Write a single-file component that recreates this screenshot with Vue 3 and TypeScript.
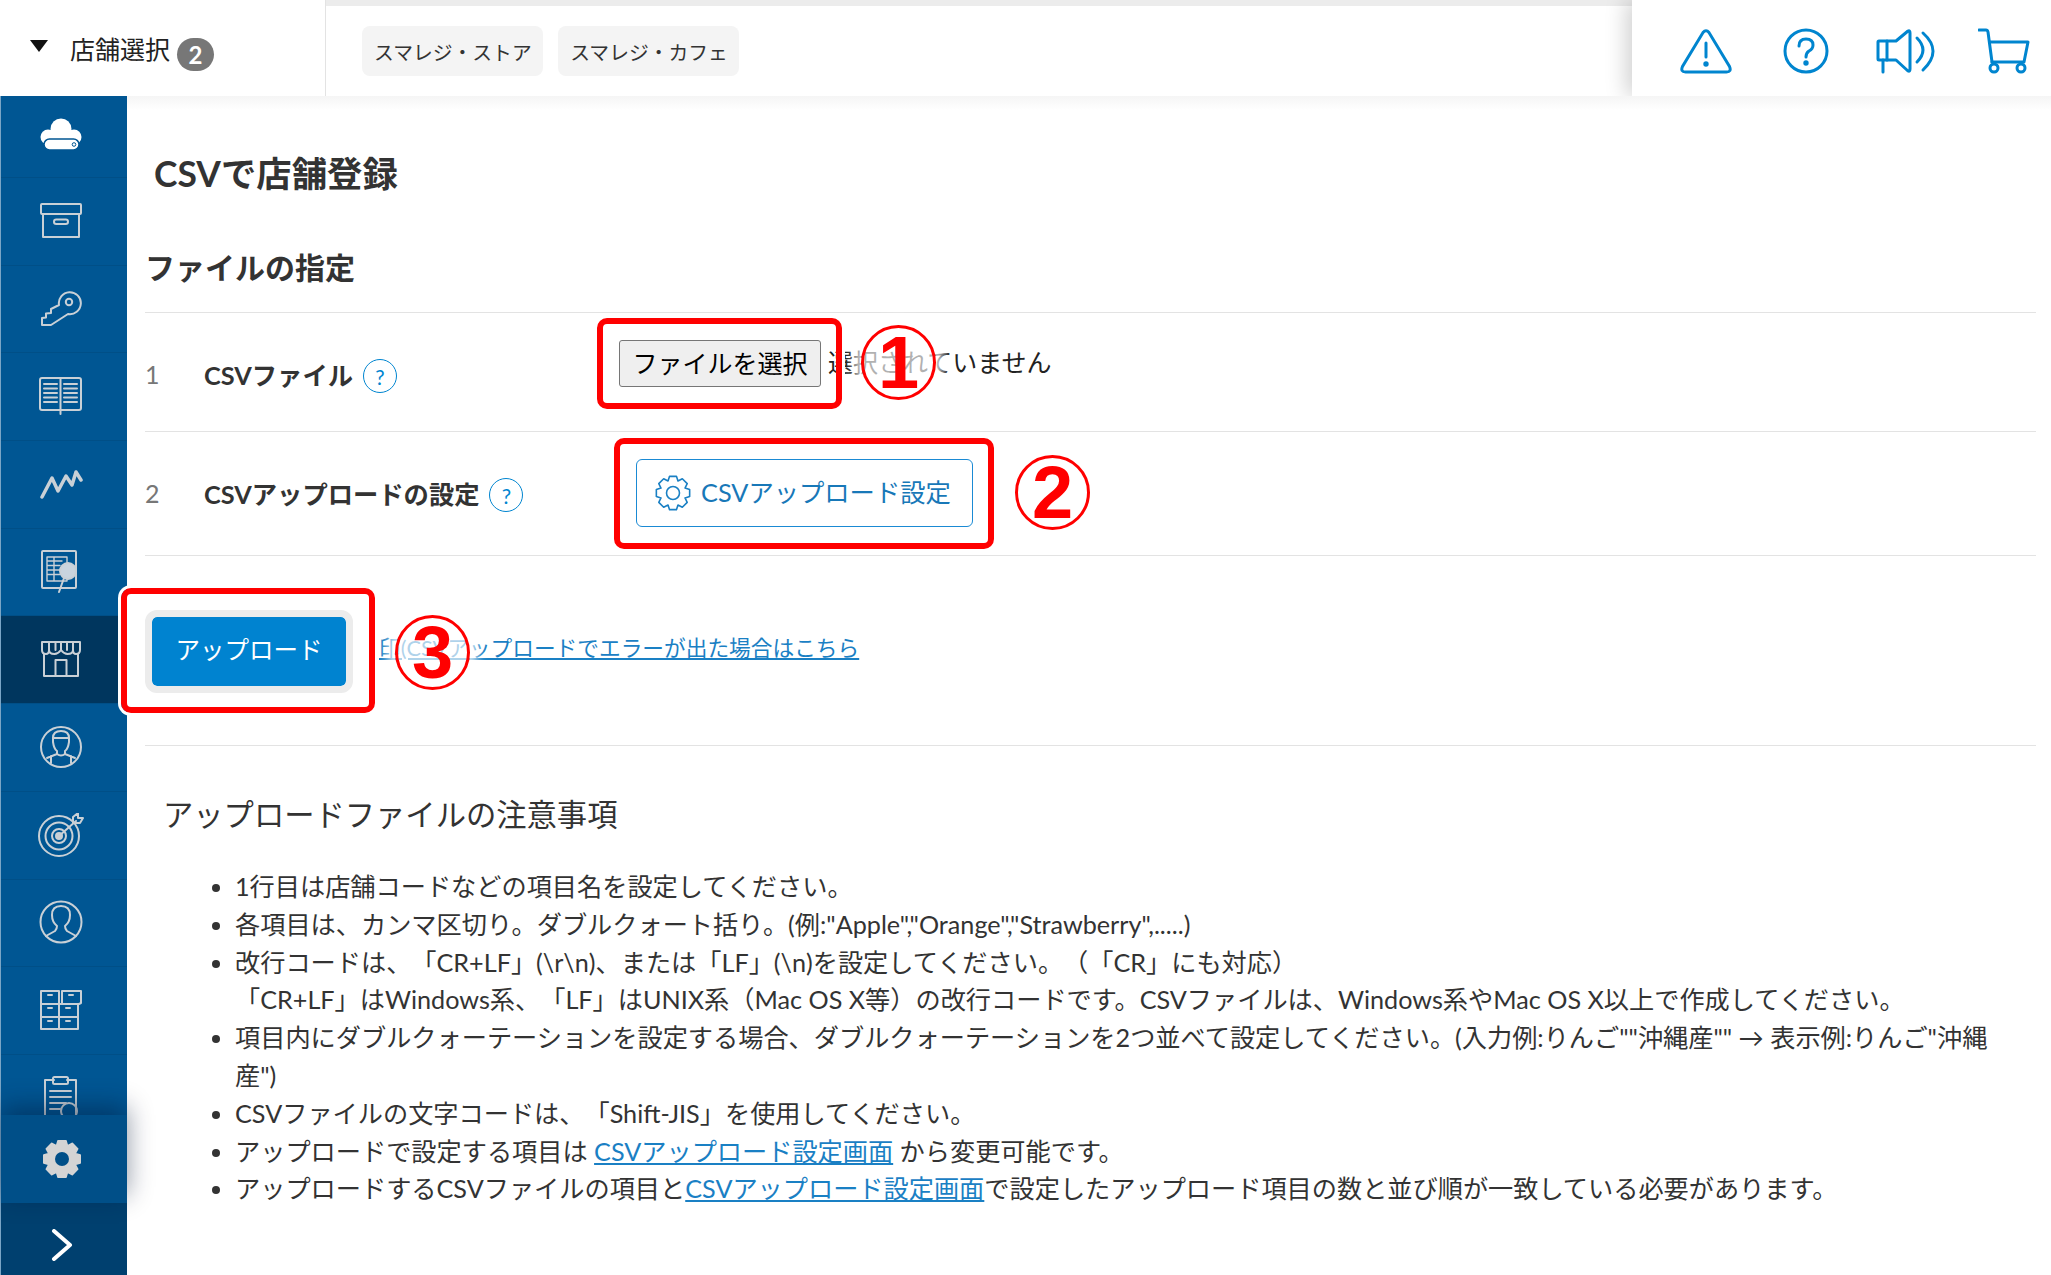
<script setup lang="ts">
function gear(cx: number, cy: number, teeth: number, rOut: number, rIn: number): string {
  const step = (Math.PI * 2) / teeth
  const pts: string[] = []
  for (let i = 0; i < teeth; i++) {
    const a = i * step - Math.PI / 2
    const offsets: [number, number][] = [
      [-0.5, rIn],
      [-0.26, rOut],
      [0.26, rOut],
      [0.5, rIn],
    ]
    for (const [o, r] of offsets) {
      const t = a + o * step
      pts.push(`${(cx + r * Math.cos(t)).toFixed(2)} ${(cy + r * Math.sin(t)).toFixed(2)}`)
    }
  }
  return 'M' + pts.join('L') + 'Z'
}
const settingsGear = gear(18, 18, 8, 17, 13)
const navGear = gear(19, 19, 8, 18.5, 14)
const chips = ['スマレジ・ストア', 'スマレジ・カフェ']
const notes = [
  '1行目は店舗コードなどの項目名を設定してください。',
  '各項目は、カンマ区切り。ダブルクォート括り。(例:"Apple","Orange","Strawberry",.....)',
]
</script>

<template>
  <div class="app">
    <header class="header">
      <div class="store-select">
        <span class="tri"></span>
        <span class="store-label">店舗選択</span>
        <span class="badge">2</span>
      </div>
      <div class="chips">
        <span v-for="c in chips" :key="c" class="chip">{{ c }}</span>
      </div>
      <div class="tools">
        <svg width="52" height="46" viewBox="0 0 52 46" fill="none" stroke="#0085cf" stroke-width="3" stroke-linecap="round">
          <path d="M23 4.500Q26 .9 29 4.500L49.500 38.500Q51.800 44 46.500 44H5.500Q.2 44 2.500 38.500Z" />
          <path d="M26 15V29" />
          <circle cx="26" cy="36" r="1.200" fill="#0085cf" />
        </svg>
        <svg width="46" height="46" viewBox="0 0 46 46" fill="none" stroke="#0085cf" stroke-width="3" stroke-linecap="round">
          <circle cx="23" cy="23" r="21" />
          <path d="M16 18Q16 11 23 11Q30 11 30 17Q30 21 26 23Q23 25 23 29" />
          <circle cx="23" cy="35" r="1.200" fill="#0085cf" />
        </svg>
        <svg width="60" height="46" viewBox="0 0 60 46" fill="none" stroke="#0085cf" stroke-width="3" stroke-linecap="round" stroke-linejoin="round">
          <path d="M3 13H20L32 3Q34 2 34 5V41Q34 44 32 43L20 32H3Q2 32 2 31V14Q2 13 3 13Z" />
          <path d="M7 32V44M11 13V32" />
          <path d="M41 10Q53 22 41 34M47 5Q67 23 47 42" />
        </svg>
        <svg width="52" height="46" viewBox="0 0 52 46" fill="none" stroke="#0085cf" stroke-width="3" stroke-linecap="round" stroke-linejoin="round">
          <path d="M1 2H8Q9.500 2 10 4L14 34" />
          <path d="M12 14H50L46 34H14" />
          <circle cx="16" cy="40" r="4" />
          <circle cx="43" cy="40" r="4" />
        </svg>
      </div>
    </header>

    <div class="body">
      <nav class="sidebar">
        <div class="nav-list">
          <a class="nav-item first">
            <svg width="44" height="34" viewBox="0 0 44 34">
              <g fill="#fff">
                <circle cx="22" cy="11" r="10.500" />
                <circle cx="9" cy="19" r="7.500" />
                <circle cx="35" cy="19" r="7.500" />
                <rect x="7" y="14" width="30" height="13" />
              </g>
              <rect x="5" y="21" width="35" height="11" rx="5.500" fill="#fff" stroke="#005693" stroke-width="1.500" />
              <circle cx="35" cy="26.500" r="1.800" fill="none" stroke="#005693" />
            </svg>
          </a>
          <a class="nav-item">
            <svg width="44" height="36" viewBox="0 0 44 36" class="ico">
              <rect x="2" y="1" width="40" height="10" rx="1" />
              <path d="M4 11V34H40V11" />
              <rect x="15" y="16.500" width="14" height="4.500" rx="2.200" />
            </svg>
          </a>
          <a class="nav-item">
            <svg width="44" height="36" viewBox="0 0 44 36" class="ico">
              <path d="M20 14A11 11 0 1 1 29 23L12 34H3V27L7 26.500V22.500L12 22V18Z" />
              <circle cx="30" cy="11" r="3.200" />
            </svg>
          </a>
          <a class="nav-item">
            <svg width="44" height="38" viewBox="0 0 44 38" class="ico">
              <rect x="1" y="1" width="41" height="32" rx="2" />
              <path d="M21.500 1V37M5 7H18M5 11.500H18M5 16H18M5 20.500H18M5 25H18M25 7H38M25 11.500H38M25 16H38M25 20.500H38M25 25H38" />
            </svg>
          </a>
          <a class="nav-item">
            <svg width="44" height="32" viewBox="0 0 44 32" class="ico wave">
              <path d="M3 29L13 10L19 23L27 8L33 17L37 4L42 12" />
            </svg>
          </a>
          <a class="nav-item">
            <svg width="42" height="44" viewBox="0 0 42 44" class="ico">
              <rect x="2" y="1" width="34" height="37" rx="1" />
              <path class="thin" d="M7 7H27V31H7ZM7 11H22M7 15.500H20M7 20H20M7 24.500H20M14 7V31" />
              <path d="M24 28L19 42" />
              <circle cx="28" cy="21" r="8" fill="#c9d4de" />
            </svg>
          </a>
          <a class="nav-item active">
            <svg width="42" height="38" viewBox="0 0 42 38" class="ico">
              <path d="M2 2H40V10Q40 14 36 14Q33 14 33 10Q33 14 27.500 14Q24 14 21 10Q18 14 14.500 14Q9 14 9 10Q9 14 6 14Q2 14 2 10Z" />
              <path d="M9 2V10M15.500 2V10M21 2V10M27 2V10M33 2V10" />
              <path d="M4 14V36H38V14M15.500 36V20H26.500V36" />
            </svg>
          </a>
          <a class="nav-item">
            <svg width="44" height="44" viewBox="0 0 44 44" class="ico">
              <circle cx="22" cy="22" r="20" />
              <path d="M14 13Q14 6 22 6Q30 6 30 13V17Q29 24 26 26V29L36 33M14 13H30M14 13V17Q15 24 18 26V29L8 33M12 31V38M32 31V38M18 29Q22 32 26 29" />
            </svg>
          </a>
          <a class="nav-item">
            <svg width="46" height="44" viewBox="0 0 46 44" class="ico">
              <circle cx="21" cy="23" r="20" />
              <circle cx="21" cy="23" r="13.500" />
              <circle cx="21" cy="23" r="7" />
              <circle cx="21" cy="23" r="3" fill="#c9d0d6" />
              <path d="M21 23L38 8M35 4V10H42L45 5H40V0Z" />
            </svg>
          </a>
          <a class="nav-item">
            <svg width="44" height="44" viewBox="0 0 44 44" class="ico">
              <circle cx="22" cy="22" r="20.500" />
              <path d="M7 36L16 31Q18 29 18 26Q13 22 13 15Q13 6 22 6Q31 6 31 15Q31 22 26 26Q26 29 28 31L37 36" />
            </svg>
          </a>
          <a class="nav-item">
            <svg width="44" height="40" viewBox="0 0 44 40" class="ico">
              <path d="M2 1H20V14H2ZM23 1H42V13L40 14H23ZM2 14H20V27H2ZM20 14H39V27H20ZM2 27H20V39H2ZM20 27H39V39H20Z" />
              <path d="M9 5H13M30 5H34M9 18H13M27 18H31M9 31H13M27 31H31" />
            </svg>
          </a>
          <a class="nav-item">
            <svg width="38" height="46" viewBox="0 0 38 46" class="ico">
              <path d="M12 5H3V44H34V5H25" />
              <rect x="11" y="2" width="15" height="7" rx="1.500" />
              <path d="M8 16H29M8 22H29M8 28H24M8 34H18" />
              <circle cx="27" cy="36" r="8" />
            </svg>
          </a>
        </div>
        <a class="nav-gear">
          <svg width="38" height="38" viewBox="0 0 38 38">
            <path :d="navGear" fill="#d4d4d4" stroke="#d4d4d4" stroke-width="2" stroke-linejoin="round" />
            <circle cx="19" cy="19" r="7" fill="#004f88" />
          </svg>
        </a>
        <a class="nav-toggle">
          <svg width="22" height="32" viewBox="0 0 22 32" fill="none" stroke="#fff" stroke-width="4" stroke-linecap="round" stroke-linejoin="round">
            <path d="M3 2L19 16L3 30" />
          </svg>
        </a>
      </nav>

      <main class="main">
        <h1 class="title">CSVで店舗登録</h1>
        <h2 class="section">ファイルの指定</h2>

        <div class="row row-file">
          <span class="num">1</span>
          <div class="label label-file">
            <b>CSVファイル</b>
            <span class="help">?</span>
          </div>
          <div class="field file-field">
            <button class="file-btn" type="button">ファイルを選択</button>
            <span class="file-none">選択されていません</span>
          </div>
        </div>

        <div class="row row-setting">
          <span class="num">2</span>
          <div class="label">
            <b>CSVアップロードの設定</b>
            <span class="help">?</span>
          </div>
          <div class="field">
            <button class="setting-btn" type="button">
              <svg width="36" height="36" viewBox="0 0 36 36" fill="none" stroke="#1a80c4" stroke-width="1.600" stroke-linejoin="round">
                <path :d="settingsGear" />
                <circle cx="18" cy="18" r="6.500" />
              </svg>
              <span class="setting-text">CSVアップロード設定</span>
            </button>
          </div>
        </div>

        <div class="upload-row">
          <button class="upload-btn" type="button">アップロード</button>
          <a class="err-link">印(CSVアップロードでエラーが出た場合はこちら</a>
        </div>

        <section class="notes">
          <h3 class="notes-title">アップロードファイルの注意事項</h3>
          <ul class="notes-list">
            <li v-for="n in notes" :key="n">{{ n }}</li>
            <li>
              改行コードは、「CR+LF」(\r\n)、または「LF」(\n)を設定してください。（「CR」にも対応）<br />「CR+LF」はWindows系、「LF」はUNIX系（Mac OS X等）の改行コードです。CSVファイルは、Windows系やMac OS X以上で作成してください。
            </li>
            <li>項目内にダブルクォーテーションを設定する場合、ダブルクォーテーションを2つ並べて設定してください。(入力例:りんご""沖縄産"" → 表示例:りんご"沖縄産")</li>
            <li>CSVファイルの文字コードは、「Shift-JIS」を使用してください。</li>
            <li>アップロードで設定する項目は <a class="link">CSVアップロード設定画面</a> から変更可能です。</li>
            <li>アップロードするCSVファイルの項目と<a class="link">CSVアップロード設定画面</a>で設定したアップロード項目の数と並び順が一致している必要があります。</li>
          </ul>
        </section>
      </main>
    </div>

    <div class="mark c1"><span>1</span></div>
    <div class="mark c2"><span>2</span></div>
    <div class="mark c3"><span>3</span></div>
    <div class="redbox b1"></div>
    <div class="redbox b2"></div>
    <div class="redbox b3"></div>
  </div>
</template>

<style scoped>
.app {
  position: relative;
  width: 2051px;
  height: 1275px;
  overflow: hidden;
  display: flex;
  flex-direction: column;
  background: #fff;
  color: #333;
  font-family: Lato, "Noto Sans CJK JP", sans-serif;
  text-spacing-trim: space-all;
}
.header {
  height: 96px;
  flex: none;
  display: flex;
  overflow: hidden;
}
.store-select {
  flex: none;
  box-sizing: content-box;
  display: flex;
  align-items: center;
  padding-left: 30px;
  width: 295px;
  border-right: 1px solid #e3e3e3;
}
.tri {
  width: 0;
  height: 0;
  border-left: 9px solid transparent;
  border-right: 9px solid transparent;
  border-top: 12px solid #111;
  margin-top: -4px;
}
.store-label {
  margin-left: 22px;
  font-size: 25px;
  color: #222;
  line-height: 1;
  margin-top: 3px;
}
.badge {
  margin-left: 7px;
  width: 37px;
  height: 33px;
  border-radius: 17px;
  background: #777;
  color: #fff;
  font-size: 24px;
  font-weight: 700;
  display: flex;
  align-items: center;
  justify-content: center;
  margin-top: 12px;
}
.chips {
  flex: 1;
  border-top: 6px solid #ececec;
  display: flex;
  align-items: center;
  gap: 15px;
  padding-left: 36px;
}
.chip {
  height: 50px;
  padding: 0 11.500px 0 12px;
  background: #f4f4f4;
  border-radius: 8px;
  font-size: 19.800px;
  color: #333;
  display: flex;
  align-items: center;
}
.tools {
  width: 371px;
  flex: none;
  padding: 28px 0 0 48px;
  display: grid;
  grid-template-columns: 103px 93px 102px 52px;
  align-items: start;
  background: #fff;
  position: relative;
  box-shadow: -6px 0 20px rgba(0, 0, 0, 0.18);
}
.body {
  flex: 1;
  display: flex;
  min-height: 0;
}
.sidebar {
  width: 127px;
  flex: none;
  display: flex;
  flex-direction: column;
  background: #005693;
  border-left: 1px solid #7aa5c6;
  box-sizing: border-box;
}
.nav-list {
  flex: 1;
  min-height: 0;
  overflow: hidden;
}
.nav-item {
  height: 87.700px;
  box-sizing: border-box;
  display: flex;
  align-items: center;
  justify-content: center;
  border-bottom: 1px solid #004f87;
  padding: 0 6px 1px 0;
}
.nav-item.first {
  height: 82px;
  padding: 0 6px 3px 0;
}
.nav-item.active {
  background: #00365e;
}
.ico {
  fill: none;
  stroke: #c9d0d6;
  stroke-width: 2;
  stroke-linejoin: round;
  stroke-linecap: round;
}
.ico.wave {
  stroke-width: 3.500;
}
.thin {
  stroke-width: 1.400;
}
.nav-gear {
  height: 88px;
  flex: none;
  background: #004f88;
  display: flex;
  align-items: center;
  justify-content: center;
  padding-right: 4px;
  box-shadow: 0 -8px 24px rgba(0, 20, 50, 0.45);
  position: relative;
}
.nav-toggle {
  height: 72px;
  flex: none;
  background: #00406f;
  display: flex;
  align-items: center;
  justify-content: center;
  padding: 12px 4px 0 0;
  box-sizing: border-box;
}
.main {
  flex: 1;
  min-width: 0;
  padding: 54px 15px 0 18px;
  background: linear-gradient(#f5f5f5, #fff 14px);
  box-sizing: border-box;
}
.title {
  margin: 0 0 0 9px;
  font-size: 35.400px;
  line-height: 48px;
  font-weight: 700;
  color: #333;
}
.section {
  margin: 45px 0 21px;
  font-size: 30px;
  line-height: 48px;
  font-weight: 700;
  color: #333;
}
.row {
  display: grid;
  grid-template-columns: 59px 415px 1fr;
  border-top: 1px solid #e3e3e3;
  box-sizing: border-box;
}
.row-file {
  height: 119px;
}
.row-setting {
  height: 124px;
  align-items: center;
}
.num {
  font-size: 25px;
  color: #777;
  align-self: center;
}
.row-file .num,
.label-file {
  padding-top: 4px;
}
.row-setting .num,
.row-setting .label {
  padding-bottom: 1px;
}
.label {
  display: flex;
  align-items: center;
  gap: 10px;
  font-size: 25.300px;
  color: #333;
}
.help {
  width: 34px;
  height: 34px;
  box-sizing: border-box;
  border: 1px solid #0085d0;
  border-radius: 50%;
  color: #0085d0;
  font-size: 21px;
  display: flex;
  align-items: center;
  justify-content: center;
  margin-top: 4px;
}
.file-field {
  display: flex;
  align-items: center;
  gap: 7px;
  padding-top: 27px;
  align-self: start;
}
.file-btn {
  width: 202px;
  height: 47px;
  background: #efefef;
  border: 1px solid #767676;
  border-radius: 3px;
  font: inherit;
  font-size: 25px;
  color: #000;
  padding: 0 0 4px;
}
.file-none {
  font-size: 25px;
  color: #222;
  margin-top: -5px;
}
.setting-btn {
  margin: -2px 0 0 17px;
  width: 337px;
  height: 68px;
  background: #fff;
  border: 1px solid #1a8ad4;
  border-radius: 6px;
  font: inherit;
  color: #1878b8;
  display: flex;
  align-items: center;
  gap: 10px;
  padding: 0 0 0 18px;
  white-space: nowrap;
}
.setting-text {
  font-size: 25.300px;
  margin-top: -3px;
}
.upload-row {
  height: 191px;
  box-sizing: border-box;
  border-top: 1px solid #e3e3e3;
  border-bottom: 1px solid #e3e3e3;
  display: flex;
  align-items: flex-start;
  gap: 26px;
  padding-top: 54px;
}
.upload-btn {
  width: 208px;
  height: 83px;
  box-sizing: border-box;
  background: #0083d0;
  background-clip: padding-box;
  border: 7px solid #ececec;
  border-radius: 12px;
  color: #fff;
  font: inherit;
  font-size: 24.500px;
  padding: 0 0 6px;
}
.err-link {
  margin-top: 23px;
  font-size: 21.700px;
  line-height: 30px;
  color: #1a80c4;
  text-decoration: underline;
}
.notes {
  padding-top: 44px;
}
.notes-title {
  margin: 0 0 30px 18px;
  font-size: 30.300px;
  line-height: 48px;
  font-weight: 400;
  color: #333;
}
.notes-list {
  margin: 0;
  padding: 0 26px 0 90px;
  font-size: 25.200px;
  line-height: 37.800px;
  color: #333;
}
.link {
  color: #1a80c4;
  text-decoration: underline;
}
.mark {
  position: absolute;
  width: 75px;
  height: 75px;
  box-sizing: border-box;
  border: 3px solid #f00;
  border-radius: 50%;
  background: rgba(255, 255, 255, 0.65);
  box-shadow: 0 0 10px 8px rgba(255, 255, 255, 0.75);
  display: flex;
  align-items: center;
  justify-content: center;
  color: #f00;
  font-family: "Liberation Sans", sans-serif;
  font-weight: 700;
  font-size: 74px;
  line-height: 1;
}
.c1 { left: 861px; top: 325px; }
.c2 { left: 1015px; top: 455px; }
.c3 { left: 395px; top: 615px; }
.redbox {
  position: absolute;
  box-sizing: border-box;
  border: 6px solid #f00;
  border-radius: 10px;
  box-shadow: 0 0 0 3px #fff;
}
.b1 { left: 597px; top: 318px; width: 245px; height: 91px; }
.b2 { left: 614px; top: 438px; width: 380px; height: 111px; }
.b3 { left: 121px; top: 588px; width: 254px; height: 125px; }
</style>
